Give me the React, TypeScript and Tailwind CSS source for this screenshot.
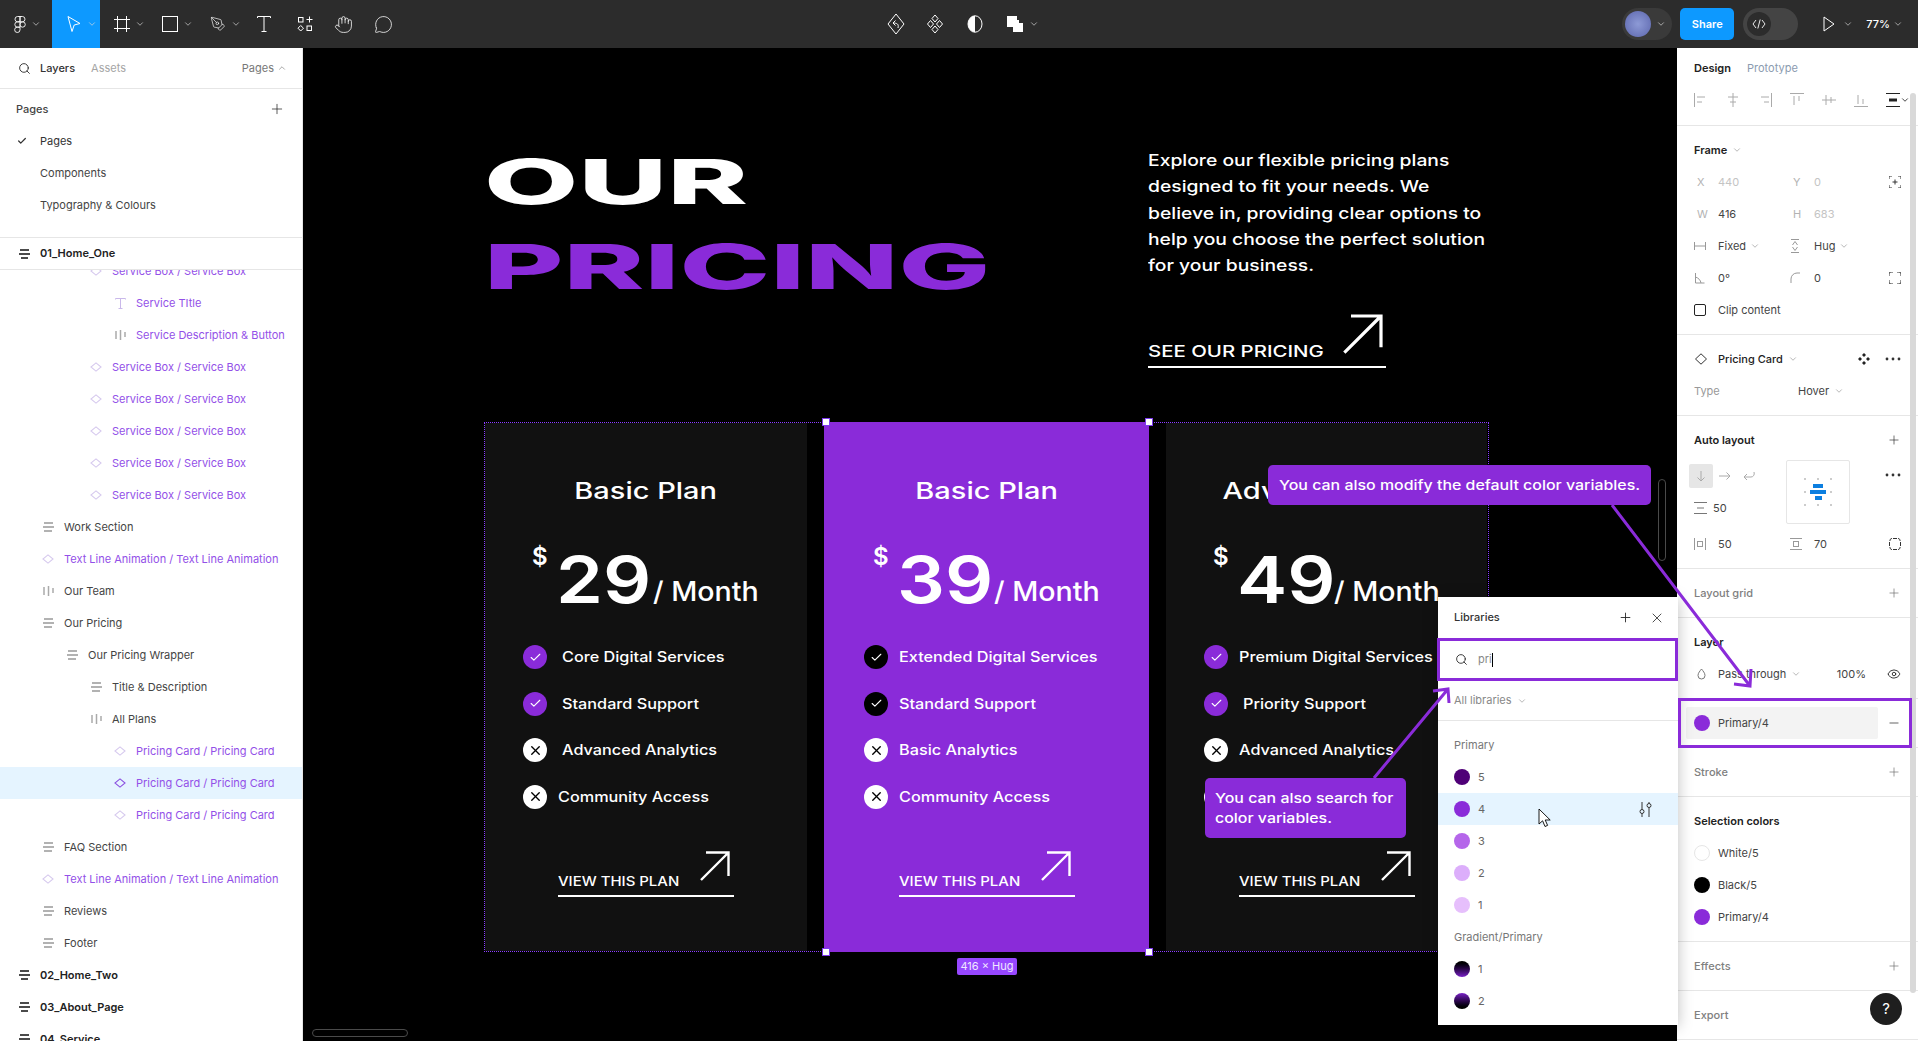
import React from "react";
import {
  ChevronDown,
  ChevronUp,
  Check,
  X,
  Plus,
  Minus,
  Search,
  Eye,
  Hand,
  PenTool,
  MessageCircle,
} from "lucide-react";

const purple = "#8a2bd9";

type Kind = "frame" | "row" | "col" | "comp" | "text";
type Layer = { level: number; kind: Kind; label: string; on?: boolean };

const layers: Layer[] = [
  { level: 3, kind: "comp", label: "Service Box / Service Box" },
  { level: 4, kind: "text", label: "Service TItle" },
  { level: 4, kind: "col", label: "Service Description & Button" },
  { level: 3, kind: "comp", label: "Service Box / Service Box" },
  { level: 3, kind: "comp", label: "Service Box / Service Box" },
  { level: 3, kind: "comp", label: "Service Box / Service Box" },
  { level: 3, kind: "comp", label: "Service Box / Service Box" },
  { level: 3, kind: "comp", label: "Service Box / Service Box" },
  { level: 1, kind: "row", label: "Work Section" },
  { level: 1, kind: "comp", label: "Text Line Animation / Text Line Animation" },
  { level: 1, kind: "col", label: "Our Team" },
  { level: 1, kind: "row", label: "Our Pricing" },
  { level: 2, kind: "row", label: "Our Pricing Wrapper" },
  { level: 3, kind: "row", label: "Title & Description" },
  { level: 3, kind: "col", label: "All Plans" },
  { level: 4, kind: "comp", label: "Pricing Card / Pricing Card" },
  { level: 4, kind: "comp", label: "Pricing Card / Pricing Card", on: true },
  { level: 4, kind: "comp", label: "Pricing Card / Pricing Card" },
  { level: 1, kind: "row", label: "FAQ Section" },
  { level: 1, kind: "comp", label: "Text Line Animation / Text Line Animation" },
  { level: 1, kind: "row", label: "Reviews" },
  { level: 1, kind: "row", label: "Footer" },
  { level: 0, kind: "frame", label: "02_Home_Two" },
  { level: 0, kind: "frame", label: "03_About_Page" },
  { level: 0, kind: "frame", label: "04_Service" },
];

const indent = ["pl-[19px]", "pl-[43px]", "pl-[67px]", "pl-[91px]", "pl-[115px]"];

const LayerIcon = ({ kind, on }: { kind: Kind; on?: boolean }) => {
  if (kind === "frame")
    return (
      <svg width="11" height="10" viewBox="0 0 11 10" fill="none" stroke="#111" strokeWidth="1.6">
        <path d="M1 1h9M0 5h11M2 9h7" />
      </svg>
    );
  if (kind === "row")
    return (
      <svg width="11" height="10" viewBox="0 0 11 10" fill="none" stroke="#999" strokeWidth="1.3">
        <path d="M1 1h9M0 5h11M1 9h8" />
      </svg>
    );
  if (kind === "col")
    return (
      <svg width="11" height="10" viewBox="0 0 11 10" fill="none" stroke="#aaa" strokeWidth="1.5">
        <path d="M1 1v8M5.5 0v10M10 2v5" />
      </svg>
    );
  if (kind === "text")
    return (
      <svg width="11" height="11" viewBox="0 0 11 11" fill="none" stroke="#c9b8ea" strokeWidth="1">
        <path d="M.5 1.5v-1h10v1M5.5.5v10M3.5 10.5h4" />
      </svg>
    );
  return (
    <svg width="13" height="10" viewBox="0 0 13 10" fill="none" stroke={on ? "#8a4fe0" : "#d6c9ee"} strokeWidth="1.1" className="-ml-[1px]">
      <path d="M6.5.6 12 5 6.5 9.4 1 5z" />
    </svg>
  );
};

const LayerRow = ({ item }: { item: Layer }) => {
  const purpleText = item.kind === "comp" || item.kind === "text" || item.label.startsWith("Service Description");
  return (
    <div className={`flex h-8 items-center gap-[10px] whitespace-nowrap ${indent[item.level]} ${item.on ? "bg-[#e5f4ff]" : ""}`}>
      <span className="flex w-[11px] justify-center">
        <LayerIcon kind={item.kind} on={item.on} />
      </span>
      <span
        className={`text-[11px] ${
          purpleText ? "text-[#9350e8]" : item.level === 0 ? "font-semibold text-[#222]" : "text-[#444]"
        }`}
      >
        {item.label}
      </span>
    </div>
  );
};

const LeftPanel = () => (
  <aside className="flex h-full w-[303px] shrink-0 flex-col border-r border-[#e6e6e6] bg-white text-[11px]">
    <div className="flex h-[41px] shrink-0 items-center border-b border-[#e6e6e6] pl-[18px] pr-[15px]">
      <Search size={13} strokeWidth={1.6} className="text-[#222]" />
      <span className="ml-[9px] font-medium text-[#333]">Layers</span>
      <span className="ml-[16px] text-[#a5a5a5]">Assets</span>
      <span className="ml-auto text-[#777]">Pages</span>
      <ChevronUp size={10} className="ml-[3px] text-[#999]" />
    </div>
    <div className="shrink-0 border-b border-[#e6e6e6] pb-[16px] pt-[4px]">
      <div className="flex h-8 items-center pl-4 pr-[17px] text-[#444]">
        <span className="font-medium">Pages</span>
        <Plus size={16} strokeWidth={1.1} className="ml-auto text-[#222]" />
      </div>
      <div className="flex h-8 items-center text-[#333]">
        <Check size={10} strokeWidth={3} className="ml-[17px] mr-[13px]" />
        Pages
      </div>
      <div className="flex h-8 items-center pl-10 text-[#444]">Components</div>
      <div className="flex h-8 items-center pl-10 text-[#444]">Typography &amp; Colours</div>
    </div>
    <div className="flex h-8 shrink-0 items-center gap-[10px] border-b border-[#e6e6e6] pl-[19px]">
      <LayerIcon kind="frame" />
      <span className="font-semibold text-[#222]">01_Home_One</span>
    </div>
    <div className="min-h-0 flex-1 overflow-hidden">
      <div className="-mt-[15px]">
        {layers.map((item, i) => (
          <LayerRow key={i} item={item} />
        ))}
      </div>
    </div>
  </aside>
);

const Chev = () => <ChevronDown size={10} strokeWidth={1.6} className="text-[#ddd]" />;

const Tool = ({ children, active, arrow = true, w = "w-12" }: { children: React.ReactNode; active?: boolean; arrow?: boolean; w?: string }) => (
  <div className={`flex h-12 items-center gap-[5px] pl-[14px] ${w} ${active ? "bg-[#0d99ff]" : ""}`}>
    {children}
    {arrow && <Chev />}
  </div>
);

const Toolbar = () => (
  <header className="flex h-12 shrink-0 items-center bg-[#2c2c2c] text-white">
    <div className="flex w-[887px] items-center">
      <Tool w="w-[52px]">
        <svg width="12" height="19" viewBox="0 0 12 18" fill="none" stroke="white" strokeWidth="0.9">
          <path d="M6 1H3.5a2.67 2.67 0 0 0 0 5.33H6zM6 1h2.5a2.67 2.67 0 0 1 0 5.33H6zM6 6.33H3.5a2.67 2.67 0 0 0 0 5.34H6z" />
          <circle cx="8.6" cy="9" r="2.67" />
          <path d="M3.5 11.67H6v2.67a2.67 2.67 0 1 1-2.5-2.67z" />
        </svg>
      </Tool>
      <Tool active>
        <svg width="16" height="18" viewBox="0 0 16 18" fill="none" stroke="white" strokeWidth="1">
          <path d="M2 1.5 14 8.5 8.2 10 6 16.5z" />
        </svg>
      </Tool>
      <Tool>
        <svg width="16" height="16" viewBox="0 0 16 16" fill="none" stroke="white" strokeWidth="1">
          <path d="M3.5 0v16M12.5 0v16M0 3.5h16M0 12.5h16" />
        </svg>
      </Tool>
      <Tool>
        <svg width="16" height="16" viewBox="0 0 16 16" fill="none" stroke="white" strokeWidth="1">
          <rect x="0.5" y="0.5" width="15" height="15" />
        </svg>
      </Tool>
      <Tool>
        <PenTool size={16} strokeWidth={1} />
      </Tool>
      <Tool arrow={false} w="w-10">
        <svg width="14" height="16" viewBox="0 0 14 16" fill="none" stroke="white" strokeWidth="1" className="-ml-[1px]">
          <path d="M.5 2V.5h13V2M7 .5v15M4.5 15.5h5" />
        </svg>
      </Tool>
      <Tool arrow={false} w="w-[41px]">
        <svg width="16" height="16" viewBox="0 0 16 16" fill="none" stroke="white" strokeWidth="1" className="-ml-[1px]">
          <rect x="1.5" y="1.5" width="4.5" height="4.5" />
          <rect x="10" y="10" width="4.5" height="4.5" />
          <path d="M12.5 0.5v6M9.5 3.5h6M3.7 9.5l2.8 2.7-2.8 2.8L1 12.2z" />
        </svg>
      </Tool>
      <Tool arrow={false} w="w-10">
        <Hand size={19} strokeWidth={1} className="-ml-[5px]" />
      </Tool>
      <Tool arrow={false} w="w-10">
        <MessageCircle size={19} strokeWidth={1} className="-ml-[5px]" />
      </Tool>
    </div>
    <div className="flex items-center">
      <svg width="18" height="22" viewBox="0 0 18 22" fill="none" stroke="white" strokeWidth="1">
        <path d="M9 1 17 11 9 21 1 11z" />
        <path d="M11 15c1-4-1-5-5-5M6 10l2.500-2.500M6 10l2.500 2.500" />
      </svg>
      <svg width="18" height="20" viewBox="0 0 18 20" fill="none" stroke="white" strokeWidth="1" className="ml-[21px]">
        <path d="M9 1 12 4.500 9 8 6 4.500zM9 12 12 15.500 9 19 6 15.500zM4.500 6.500 7.500 10 4.500 13.500 1.500 10zM13.500 6.500 16.500 10 13.500 13.500 10.500 10z" />
      </svg>
      <svg width="16" height="18" viewBox="0 0 16 18" className="ml-[23px]">
        <ellipse cx="8" cy="9" rx="7" ry="8.200" fill="none" stroke="white" />
        <path d="M8 .800a7 8.200 0 0 0 0 16.400z" fill="white" />
      </svg>
      <svg width="17" height="16" viewBox="0 0 17 16" fill="white" className="ml-[24px]">
        <path d="M0 0h10v4h2v12h-2v-5H0z" />
        <rect x="6" y="7" width="10" height="9" />
      </svg>
      <span className="ml-[5px]">
        <Chev />
      </span>
    </div>
    <div className="ml-auto flex items-center">
      <div className="flex h-8 w-[50px] items-center rounded-full bg-[#3a3a3a] pl-[3px]">
        <span className="h-[26px] w-[26px] rounded-full bg-[radial-gradient(circle,#8d9ad6,#5c66ad)]" />
        <span className="ml-[5px]">
          <Chev />
        </span>
      </div>
      <div className="ml-2 flex h-8 w-[54px] items-center justify-center rounded-[5px] bg-[#0d99ff] text-[11px] font-semibold">Share</div>
      <div className="ml-[9px] flex h-8 w-[55px] items-center rounded-full bg-[#444] pl-[4px]">
        <span className="flex h-[24px] w-[24px] items-center justify-center rounded-full bg-[#2c2c2c] text-[10px]">
          <svg width="14" height="10" viewBox="0 0 14 10" fill="none" stroke="white" strokeWidth="0.9">
            <path d="M4 1 1 5l3 4M10 1l3 4-3 4M8.200 .5 5.800 9.500" />
          </svg>
        </span>
      </div>
      <svg width="12" height="16" viewBox="0 0 12 16" fill="none" stroke="white" className="ml-[25px]">
        <path d="M1 1v14l10-7z" />
      </svg>
      <span className="ml-[8px]">
        <Chev />
      </span>
      <span className="ml-[13px] text-[11px] font-medium">77%</span>
      <span className="ml-[3px] mr-[15px]">
        <Chev />
      </span>
    </div>
  </header>
);

const Arrow = ({ size = 30, stroke = 2.4 }: { size?: number; stroke?: number }) => (
  <svg width={size} height={size} viewBox="0 0 30 30" fill="none" stroke="white" strokeWidth={stroke}>
    <path d="M1 29 28.500 1.500M6 1.500h22.500V25" />
  </svg>
);

type Feature = { label: string; on: boolean; gap: string };
type Plan = { title: string; price: string; features: Feature[]; hot?: boolean };

const plans: Plan[] = [
  {
    title: "Basic Plan",
    price: "29",
    features: [
      { label: "Core Digital Services", on: true, gap: "gap-[15px]" },
      { label: "Standard Support", on: true, gap: "gap-[15px]" },
      { label: "Advanced Analytics", on: false, gap: "gap-[15px]" },
      { label: "Community Access", on: false, gap: "gap-[11px]" },
    ],
  },
  {
    title: "Basic Plan",
    price: "39",
    hot: true,
    features: [
      { label: "Extended Digital Services", on: true, gap: "gap-[11px]" },
      { label: "Standard Support", on: true, gap: "gap-[11px]" },
      { label: "Basic Analytics", on: false, gap: "gap-[11px]" },
      { label: "Community Access", on: false, gap: "gap-[11px]" },
    ],
  },
  {
    title: "Advanced Plan",
    price: "49",
    features: [
      { label: "Premium Digital Services", on: true, gap: "gap-[11px]" },
      { label: "Priority Support", on: true, gap: "gap-[15px]" },
      { label: "Advanced Analytics", on: false, gap: "gap-[11px]" },
      { label: "Community Access", on: false, gap: "gap-[11px]" },
    ],
  },
];

const Mark = ({ on, hot }: { on: boolean; hot?: boolean }) => (
  <span
    className={`flex h-6 w-6 shrink-0 items-center justify-center rounded-full ${
      on ? (hot ? "bg-black text-white" : "bg-[#8a2bd9] text-white") : "bg-white text-black"
    }`}
  >
    {on ? <Check size={13} strokeWidth={2} /> : <X size={15} strokeWidth={2.2} />}
  </span>
);

const PlanCard = ({ plan, last }: { plan: Plan; last?: boolean }) => (
  <div
    className={`flex shrink-0 flex-col text-white ${
      plan.hot ? "-my-px w-[325px] bg-[#8a2bd9] pt-[55px]" : `${last ? "w-[321px]" : "w-[322px]"} bg-[#111] pt-[54px]`
    }`}
  >
    <div className="flex h-7 items-center justify-center text-center">
      <span className="inline-block origin-center scale-x-[1.26] whitespace-nowrap text-[23px] font-medium">{plan.title}</span>
    </div>
    <div className={`mt-[40px] flex h-[66px] items-start ${plan.hot ? "pl-[49px]" : "pl-[47px]"}`}>
      <span className="w-[24px] text-[24px] font-semibold leading-[24px]">$</span>
      <span className="mt-[2px] w-[97px] origin-left scale-x-[1.16] whitespace-nowrap text-[65px] font-semibold leading-[66px]">{plan.price}</span>
      <span className="mt-[30px] origin-left scale-x-[1.06] whitespace-nowrap text-[27px] font-medium leading-[34px]">/ Month</span>
    </div>
    <div className={`mt-[34px] flex flex-col gap-[22.5px] ${plan.hot ? "pl-[40px]" : "pl-[38px]"}`}>
      {plan.features.map((f) => (
        <div key={f.label} className={`flex h-6 items-center ${f.gap}`}>
          <Mark on={f.on} hot={plan.hot} />
          <span className="inline-block origin-left scale-x-[1.12] whitespace-nowrap text-[14.5px] font-[450]">{f.label}</span>
        </div>
      ))}
    </div>
    <div className={`mt-[42px] flex h-[46px] w-[176px] items-start justify-between border-b-2 border-white ${plan.hot ? "ml-[75px]" : "ml-[73px]"}`}>
      <span className="mt-[20px] inline-block origin-left scale-x-[1.15] whitespace-nowrap text-[13px] font-medium leading-[20px]">VIEW THIS PLAN</span>
      <span className="mr-[4px]">
        <Arrow />
      </span>
    </div>
  </div>
);

const Handle = ({ pos }: { pos: string }) => <span className={`absolute h-2 w-2 border border-[#7c3aed] bg-white ${pos}`} />;

const Canvas = () => (
  <main className="relative min-w-0 flex-1 bg-black pl-[181px] text-white">
    <div className="flex h-[374px] pl-[4px] pt-[91px]">
      <div className="-ml-[4px] w-[664px] text-[62px] font-extrabold leading-[85px]">
        <div className="origin-left scale-x-[1.97] whitespace-nowrap">OUR</div>
        <div className="origin-left scale-x-[1.97] whitespace-nowrap text-[#8a2bd9]">PRICING</div>
      </div>
      <div>
        <div className="mt-[8px] text-[16.5px] font-[450] leading-[26.3px]">
          <div className="origin-left scale-x-[1.17] whitespace-nowrap">Explore our flexible pricing plans</div>
          <div className="origin-left scale-x-[1.17] whitespace-nowrap">designed to fit your needs. We</div>
          <div className="origin-left scale-x-[1.17] whitespace-nowrap">believe in, providing clear options to</div>
          <div className="origin-left scale-x-[1.17] whitespace-nowrap">help you choose the perfect solution</div>
          <div className="origin-left scale-x-[1.17] whitespace-nowrap">for your business.</div>
        </div>
        <div className="mt-[35px] flex h-[55px] w-[238px] items-start justify-between border-b-2 border-white">
          <span className="mt-[26px] inline-block origin-left scale-x-[1.275] whitespace-nowrap text-[16px] font-medium leading-[24px]">SEE OUR PRICING</span>
          <span className="mr-[3px] mt-[1px]">
            <Arrow size={40} stroke={2.4} />
          </span>
        </div>
      </div>
    </div>
    <div className="relative flex h-[530px] w-[1005px] gap-[17px] border border-dotted border-[#8b3dff]">
      {plans.map((p, i) => (
        <PlanCard key={i} plan={p} last={i === 2} />
      ))}
      <Handle pos="left-[337px] top-[-5px]" />
      <Handle pos="left-[660px] top-[-5px]" />
      <Handle pos="left-[337px] bottom-[-5px]" />
      <Handle pos="left-[660px] bottom-[-5px]" />
      <div className="absolute left-[472px] top-[535px] flex h-[17px] w-[60px] items-center justify-center rounded-[2px] bg-[#9747ff] text-[11px] text-[#f1e8ff]">416 × Hug</div>
    </div>
    <div className="absolute left-[9px] top-[981px] h-2 w-24 rounded-full border border-[#4a4a4a]" />
    <div className="absolute left-[1355px] top-[431px] h-[82px] w-2 rounded-full border border-[#4a4a4a]" />
  </main>
);

const Sec = ({ children, className = "" }: { children: React.ReactNode; className?: string }) => (
  <section className={`border-b border-[#e6e6e6] py-2 ${className}`}>{children}</section>
);

const Row = ({ children }: { children: React.ReactNode }) => <div className="flex h-8 items-center pl-[17px] pr-[17px]">{children}</div>;

const Stroke = ({ children, w = 16, h = 14 }: { children: React.ReactNode; w?: number; h?: number }) => (
  <svg width={w} height={h} viewBox={`0 0 ${w} ${h}`} fill="none" stroke="currentColor" strokeWidth="1">
    {children}
  </svg>
);

const Field = ({ icon, value, faint, w = "w-[96px]", chev }: { icon: React.ReactNode; value: string; faint?: boolean; w?: string; chev?: boolean }) => (
  <div className={`flex items-center ${w}`}>
    <span className="flex w-6 text-[#999]">{icon}</span>
    <span className={faint ? "text-[#c4c4c4]" : "text-[#444]"}>{value}</span>
    {chev && <ChevronDown size={10} className="ml-[4px] text-[#aaa]" />}
  </div>
);

const Letter = ({ c }: { c: string }) => <span className="ml-[3px] text-[#b3b3b3]">{c}</span>;

const Head = ({ label, muted, plus = true }: { label: string; muted?: boolean; plus?: boolean }) => (
  <Row>
    <span className={muted ? "font-medium text-[#808080]" : "font-semibold text-[#222]"}>{label}</span>
    {plus && <Plus size={14} strokeWidth={1.1} className={`ml-auto ${muted ? "text-[#666]" : "text-[#222]"}`} />}
  </Row>
);

const Dots = () => (
  <svg width="16" height="4" viewBox="0 0 16 4" fill="#333" className="ml-auto">
    <circle cx="2" cy="2" r="1.400" />
    <circle cx="8" cy="2" r="1.400" />
    <circle cx="14" cy="2" r="1.400" />
  </svg>
);

const Swatch = ({ c, label }: { c: string; label: string }) => (
  <Row>
    <span className={`h-4 w-4 rounded-full ${c}`} />
    <span className="ml-2 text-[#444]">{label}</span>
  </Row>
);

const RightPanel = () => (
  <aside className="relative h-full w-[241px] shrink-0 bg-white text-[11px]">
    <div className="flex h-10 items-center pl-[17px]">
      <span className="font-semibold text-[#222]">Design</span>
      <span className="ml-4 text-[#8b9bb0]">Prototype</span>
    </div>
    <div className="flex h-[38px] items-start border-b border-[#e6e6e6] pl-[17px] pt-[5px] text-[#aaa]">
      <div className="flex h-[14px] w-[216px] items-center justify-between">
        <Stroke w={14}><path d="M.5 0v14M3 4h8M3 9h5" /></Stroke>
        <Stroke w={14}><path d="M7 0v14M2 4h10M4 9h6" /></Stroke>
        <Stroke w={14}><path d="M13.500 0v14M3 4h8M6 9h5" /></Stroke>
        <Stroke w={14}><path d="M0 .5h14M4 3v9M9 3v5" /></Stroke>
        <Stroke w={14}><path d="M0 7h14M4 2v10M9 4v6" /></Stroke>
        <Stroke w={14}><path d="M0 13.500h14M4 2v9M9 6v5" /></Stroke>
        <span className="flex items-center text-[#222]">
          <Stroke w={14}><path d="M0 .5h14M0 13.500h14" /><path d="M3 7h8" strokeWidth="3" /></Stroke>
          <ChevronDown size={10} />
        </span>
      </div>
    </div>
    <Sec>
      <Row>
        <span className="font-semibold text-[#222]">Frame</span>
        <ChevronDown size={10} className="ml-[5px] text-[#aaa]" />
      </Row>
      <Row>
        <Field icon={<Letter c="X" />} value="440" faint />
        <Field icon={<Letter c="Y" />} value="0" faint w="w-[80px]" />
        <span className="ml-auto">
          <Stroke w={12} h={12}><path d="M0 3V0h3M9 0h3v3M12 9v3H9M3 12H0V9M6 3.500v5M3.500 6h5" stroke="#333" /></Stroke>
        </span>
      </Row>
      <Row>
        <Field icon={<Letter c="W" />} value="416" />
        <Field icon={<Letter c="H" />} value="683" faint w="w-[80px]" />
      </Row>
      <Row>
        <Field icon={<Stroke w={12} h={10}><path d="M.5 1v8M11.500 1v8M.5 5h11" /></Stroke>} value="Fixed" chev />
        <Field icon={<Stroke w={10} h={14}><path d="M1 .5h8M1 13.500h8M2.500 6 5 2.500 7.500 6M2.500 8 5 11.500 7.500 8" /></Stroke>} value="Hug" chev w="w-[80px]" />
      </Row>
      <Row>
        <Field icon={<Stroke w={12} h={12}><path d="M1.500 1v10h9M1.500 5c3 1 5 3 5.500 6" /></Stroke>} value="0°" />
        <Field icon={<Stroke w={12} h={12}><path d="M1 11V7a6 6 0 0 1 6-6h3" /></Stroke>} value="0" w="w-[80px]" />
        <span className="ml-auto text-[#333]">
          <Stroke w={12} h={12}><path d="M0 4V2a2 2 0 0 1 2-2h2M8 0h2a2 2 0 0 1 2 2v2M12 8v2a2 2 0 0 1-2 2H8M4 12H2a2 2 0 0 1-2-2V8" /></Stroke>
        </span>
      </Row>
      <Row>
        <span className="h-3 w-3 rounded-[2px] border border-[#222]" />
        <span className="ml-[12px] text-[#444]">Clip content</span>
      </Row>
    </Sec>
    <Sec>
      <Row>
        <span className="w-6 text-[#333]">
          <Stroke w={14} h={12}><path d="M7 .8 12.500 6 7 11.200 1.500 6z" /></Stroke>
        </span>
        <span className="font-medium text-[#222]">Pricing Card</span>
        <ChevronDown size={10} className="ml-[5px] text-[#aaa]" />
        <svg width="12" height="12" viewBox="0 0 12 12" fill="#222" className="ml-[60px]">
          <path d="M6 0 8 2 6 4 4 2zM6 8l2 2-2 2-2-2zM2 4l2 2-2 2-2-2zM10 4l2 2-2 2-2-2z" />
        </svg>
        <Dots />
      </Row>
      <Row>
        <span className="w-[104px] text-[#999]">Type</span>
        <span className="text-[#444]">Hover</span>
        <ChevronDown size={10} className="ml-[5px] text-[#aaa]" />
      </Row>
    </Sec>
    <Sec>
      <Head label="Auto layout" />
      <div className="flex h-[72px] pl-[12px] pr-[17px] pt-[4px]">
        <div className="mt-[4px] w-[97px]">
          <div className="flex h-6 items-center text-[#aaa]">
            <span className="flex h-6 w-6 items-center justify-center rounded-[2px] bg-[#e6e6e6]">
              <Stroke w={10} h={12}><path d="M5 1v10M1.500 7.500 5 11l3.500-3.500" /></Stroke>
            </span>
            <span className="ml-[6px]"><Stroke w={12} h={10}><path d="M0 5h11M7.500 1.500 11 5 7.500 8.500" /></Stroke></span>
            <span className="ml-[12px]"><Stroke w={12} h={10}><path d="M11 1c1 3-1 5-3 5H1M4 3 1 6l3 3" /></Stroke></span>
          </div>
          <div className="mt-[8px] flex h-6 items-center pl-[5px]">
            <span className="flex w-[19px] text-[#777]">
              <Stroke w={13} h={12}><path d="M0 .5h13M0 11.500h13M3 6h7" /></Stroke>
            </span>
            <span className="text-[#444]">50</span>
          </div>
        </div>
        <div className="relative h-16 w-16 rounded-[2px] border border-[#e6e6e6]">
          <div className="absolute left-[11px] top-[11px] grid h-[40px] w-[40px] grid-cols-3 place-items-center">
            {Array.from({ length: 9 }).map((_, i) => (
              <span key={i} className={`h-[2px] w-[2px] ${i === 4 ? "bg-transparent" : "bg-[#ccc]"}`} />
            ))}
          </div>
          <div className="absolute left-[23px] top-[23px] flex w-4 flex-col items-center gap-[2px]">
            <span className="h-[4px] w-[10px] bg-[#0d7fe0]" />
            <span className="h-[4px] w-4 bg-[#0d7fe0]" />
            <span className="h-[4px] w-[7px] bg-[#0d7fe0]" />
          </div>
        </div>
        <div className="mt-[13px] flex flex-1 items-start">
          <Dots />
        </div>
      </div>
      <Row>
        <Field icon={<Stroke w={12} h={12}><path d="M.5 0v12M11.500 0v12" /><rect x="3.500" y="3.500" width="5" height="5" /></Stroke>} value="50" />
        <Field icon={<Stroke w={12} h={12}><path d="M0 .5h12M0 11.500h12" /><rect x="3.500" y="3.500" width="5" height="5" /></Stroke>} value="70" w="w-[80px]" />
        <span className="ml-auto text-[#333]">
          <Stroke w={12} h={12}><path d="M4 .5h4M4 11.500h4M.5 4v4M11.500 4v4M1 3a2 2 0 0 1 2-2.500M9 .5A2 2 0 0 1 11 3M11 9a2 2 0 0 1-2 2.500M3 11.500A2 2 0 0 1 1 9" /></Stroke>
        </span>
      </Row>
    </Sec>
    <Sec>
      <Head label="Layout grid" muted />
    </Sec>
    <Sec className="h-[81px]">
      <Head label="Layer" plus={false} />
      <Row>
        <span className="flex w-6 pl-[3px] text-[#777]">
          <Stroke w={9} h={12}><path d="M4.500 1C6 3 8 5 8 7.500a3.500 3.500 0 0 1-7 0C1 5 3 3 4.500 1z" /></Stroke>
        </span>
        <span className="text-[#444]">Pass through</span>
        <ChevronDown size={10} className="ml-[5px] text-[#aaa]" />
        <span className="ml-auto text-[#444]">100%</span>
        <Eye size={14} strokeWidth={1.5} className="ml-[21px] text-[#222]" />
      </Row>
    </Sec>
    <section className="h-[49px] border-b border-[#e6e6e6] pl-[9px] pr-[17px] pt-[8px]">
      <div className="flex h-8 items-center">
        <div className="flex h-8 w-[192px] items-center rounded-[2px] bg-[#f3f3f3] pl-[8px]">
          <span className="h-4 w-4 rounded-full bg-[#8a2bd9]" />
          <span className="ml-2 text-[#444]">Primary/4</span>
        </div>
        <Minus size={14} strokeWidth={1.2} className="ml-auto text-[#222]" />
      </div>
    </section>
    <Sec>
      <Head label="Stroke" muted />
    </Sec>
    <Sec>
      <Head label="Selection colors" plus={false} />
      <Swatch c="border border-[#e6e6e6] bg-white" label="White/5" />
      <Swatch c="bg-black" label="Black/5" />
      <Swatch c="bg-[#8a2bd9]" label="Primary/4" />
    </Sec>
    <Sec>
      <Head label="Effects" muted />
    </Sec>
    <Sec>
      <Head label="Export" muted plus={false} />
    </Sec>
    <div className="absolute left-[233px] top-[45px] h-[900px] w-[6px] rounded-full bg-[#d9d9d9]" />
    <div className="absolute left-[193px] top-[945px] flex h-8 w-8 items-center justify-center rounded-full bg-[#1e1e1e] text-[15px] text-white">?</div>
  </aside>
);

const LibRow = ({ c, label, on }: { c: string; label: string; on?: boolean }) => (
  <div className={`flex h-8 items-center pl-4 pr-[26px] ${on ? "bg-[#e5f4ff]" : ""}`}>
    <span className={`h-4 w-4 rounded-full ${c}`} />
    <span className="ml-2 text-[#666]">{label}</span>
    {on && (
      <svg width="13" height="15" viewBox="0 0 13 15" fill="none" stroke="#333" strokeWidth="1" className="ml-auto">
        <path d="M3 0v7.500M3 11.500V15M10 0v1.500M10 5.500V15" />
        <circle cx="3" cy="9.500" r="2" />
        <circle cx="10" cy="3.500" r="2" />
      </svg>
    )}
  </div>
);

const Libraries = () => (
  <div className="absolute left-[1438px] top-[597px] z-10 h-[428px] w-[240px] bg-white text-[11px] shadow-[0_2px_14px_rgba(0,0,0,0.25)]">
    <div className="flex h-[41px] items-center pl-4 pr-[13px]">
      <span className="font-medium text-[#333]">Libraries</span>
      <Plus size={15} strokeWidth={1.4} className="ml-auto text-[#222]" />
      <X size={16} strokeWidth={1.2} className="ml-[16px] text-[#222]" />
    </div>
    <div className="-ml-px flex h-[43px] items-center border-[3px] border-[#8a2bd9] pl-[15px]">
      <Search size={13} strokeWidth={1.6} className="text-[#222]" />
      <span className="ml-[10px] text-[#888]">pri</span>
      <span className="h-[14px] w-px bg-black" />
    </div>
    <div className="flex h-10 items-center border-b border-[#e6e6e6] pl-4 text-[#888]">
      All libraries
      <ChevronDown size={10} className="ml-[5px] text-[#aaa]" />
    </div>
    <div className="pt-2">
      <div className="flex h-8 items-center pl-4 text-[#777]">Primary</div>
      <LibRow c="bg-[#4f0077]" label="5" />
      <LibRow c="bg-[#8a2bd9]" label="4" on />
      <LibRow c="bg-[#b566ea]" label="3" />
      <LibRow c="bg-[#dcaefb]" label="2" />
      <LibRow c="bg-[#e6bffc]" label="1" />
      <div className="flex h-8 items-center pl-4 text-[#777]">Gradient/Primary</div>
      <LibRow c="bg-linear-to-b from-black to-[#7a22c8]" label="1" />
      <LibRow c="bg-linear-to-b from-[#7a22c8] to-black" label="2" />
    </div>
    <svg width="14" height="20" viewBox="0 0 14 20" className="absolute left-[100px] top-[211px]" fill="white" stroke="black" strokeWidth="0.9">
      <path d="M1 1v15l3.600-3.200 2.400 5.700 2.600-1.100-2.400-5.400h5z" />
    </svg>
  </div>
);

// callouts and their arrows sit on top of the whole window
const Annotations = () => (
  <>
    <div className="absolute left-[1268px] top-[465px] z-20 flex h-10 w-[383px] items-center rounded-[5px] bg-[#8a2bd9] pl-[11px] text-white">
      <span className="inline-block origin-left scale-x-[1.18] whitespace-nowrap text-[13.5px] font-medium">You can also modify the default color variables.</span>
    </div>
    <div className="absolute left-[1205px] top-[778px] z-20 h-[60px] w-[201px] rounded-[5px] bg-[#8a2bd9] pl-[10px] pt-[10px] text-[13.5px] font-medium leading-[20px] text-white">
      <div className="origin-left scale-x-[1.18] whitespace-nowrap">You can also search for</div>
      <div className="origin-left scale-x-[1.18] whitespace-nowrap">color variables.</div>
    </div>
    <svg width="1918" height="1041" viewBox="0 0 1918 1041" fill="none" stroke={purple} strokeWidth="3" className="pointer-events-none absolute left-0 top-0 z-20">
      <path d="M1612 505 1750 686M1734 684l16 2 1-17" />
      <path d="M1374 778 1448 689M1433 691l15-2 1 14" />
    </svg>
    <div className="pointer-events-none absolute left-[1678px] top-[698px] z-20 h-[50px] w-[234px] border-[3px] border-[#8a2bd9]" />
  </>
);

export default function App() {
  return (
    <div className="relative flex h-[1041px] w-[1918px] flex-col overflow-hidden bg-white [font-family:Inter,sans-serif]">
      <Toolbar />
      <div className="flex min-h-0 flex-1">
        <LeftPanel />
        <Canvas />
        <RightPanel />
      </div>
      <Libraries />
      <Annotations />
    </div>
  );
}
